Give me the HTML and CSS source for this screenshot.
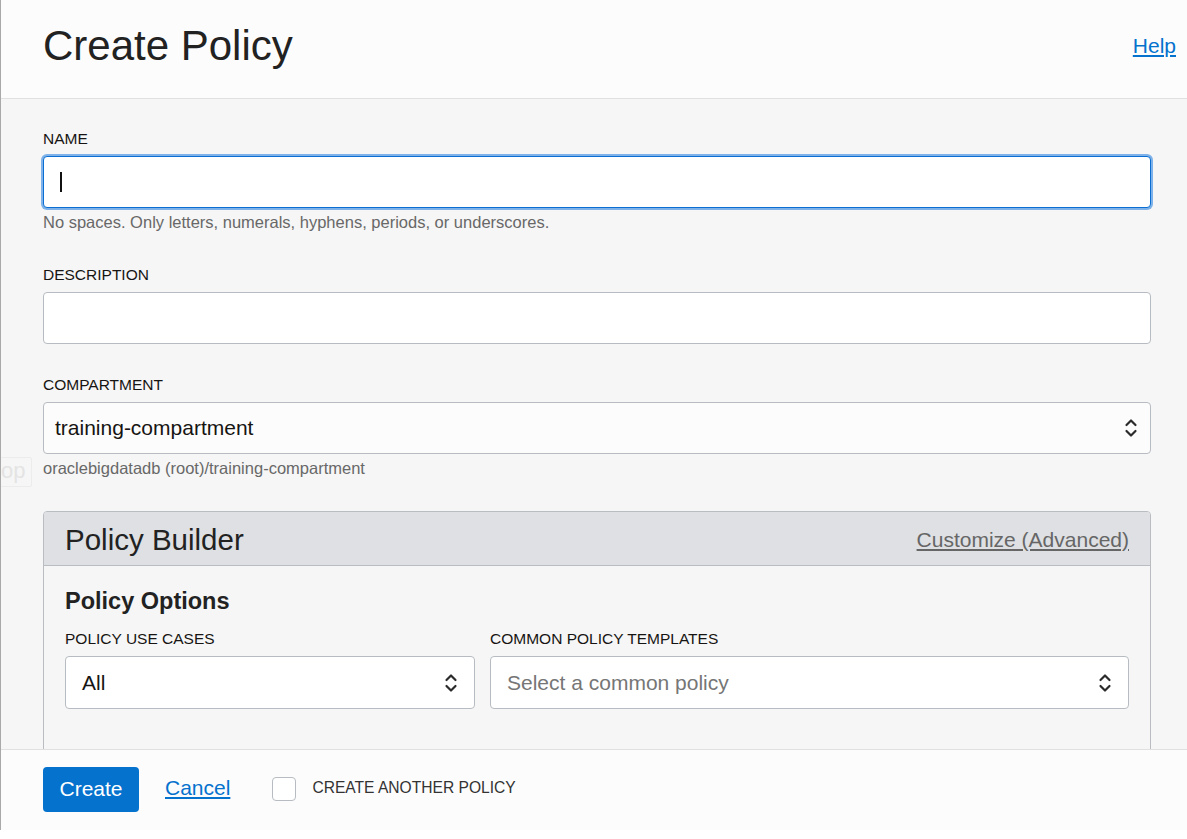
FILE: index.html
```html
<!DOCTYPE html>
<html lang="en">
<head>
<meta charset="utf-8">
<title>Create Policy</title>
<link rel="stylesheet" href="styles.css">
</head>
<body>
<div class="panel">
  <header class="head">
    <h1 class="title">Create Policy</h1>
    <a class="help" href="#">Help</a>
  </header>
  <main class="main">
    <div class="ghost">op</div>
    <div class="field">
      <label class="label">NAME</label>
      <div class="input focused"><span class="caret"></span></div>
      <div class="hint">No spaces. Only letters, numerals, hyphens, periods, or underscores.</div>
    </div>
    <div class="field">
      <label class="label">DESCRIPTION</label>
      <div class="input"></div>
    </div>
    <div class="field">
      <label class="label">COMPARTMENT</label>
      <div class="input select offwhite"><span class="value">training-compartment</span>
        <svg class="chev" width="14" height="22" viewBox="0 0 14 22"><path d="M2.5 8 L7 3.5 L11.5 8" fill="none" stroke="#2b2b2b" stroke-width="2.2" stroke-linecap="round" stroke-linejoin="round"/><path d="M2.5 14 L7 18.5 L11.5 14" fill="none" stroke="#2b2b2b" stroke-width="2.2" stroke-linecap="round" stroke-linejoin="round"/></svg>
      </div>
      <div class="hint">oraclebigdatadb (root)/training-compartment</div>
    </div>
    <section class="builder">
      <div class="builder-head">
        <h2 class="builder-title">Policy Builder</h2>
        <a class="customize" href="#">Customize (Advanced)</a>
      </div>
      <div class="builder-body">
        <h3 class="options-title">Policy Options</h3>
        <div class="options-grid">
          <div class="opt">
            <label class="label">POLICY USE CASES</label>
            <div class="input select sel-sm"><span class="value">All</span>
              <svg class="chev" width="14" height="22" viewBox="0 0 14 22"><path d="M2.5 8 L7 3.5 L11.5 8" fill="none" stroke="#2b2b2b" stroke-width="2.2" stroke-linecap="round" stroke-linejoin="round"/><path d="M2.5 14 L7 18.5 L11.5 14" fill="none" stroke="#2b2b2b" stroke-width="2.2" stroke-linecap="round" stroke-linejoin="round"/></svg>
            </div>
          </div>
          <div class="opt">
            <label class="label">COMMON POLICY TEMPLATES</label>
            <div class="input select sel-sm"><span class="value placeholder">Select a common policy</span>
              <svg class="chev" width="14" height="22" viewBox="0 0 14 22"><path d="M2.5 8 L7 3.5 L11.5 8" fill="none" stroke="#2b2b2b" stroke-width="2.2" stroke-linecap="round" stroke-linejoin="round"/><path d="M2.5 14 L7 18.5 L11.5 14" fill="none" stroke="#2b2b2b" stroke-width="2.2" stroke-linecap="round" stroke-linejoin="round"/></svg>
            </div>
          </div>
        </div>
      </div>
    </section>
  </main>
  <footer class="foot">
    <button class="btn-primary">Create</button>
    <a class="cancel" href="#">Cancel</a>
    <span class="checkbox"></span>
    <span class="check-label">CREATE ANOTHER POLICY</span>
  </footer>
</div>
</body>
</html>
```

FILE: styles.css
```css
* { box-sizing: border-box; }
html, body { margin: 0; padding: 0; background: #ffffff; }
body { font-family: "Liberation Sans", Arial, sans-serif; color: #161513; }

.panel {
  height: 830px;
  border-left: 1px solid #a9a9a9;
  display: flex;
  flex-direction: column;
  overflow: hidden;
}

.head {
  height: 99px;
  flex: none;
  background: #fcfcfc;
  border-bottom: 1px solid #e0e0e0;
  display: flex;
  justify-content: space-between;
  align-items: flex-start;
  padding: 0 11px 0 42px;
}
.title {
  margin: 25px 0 0;
  font-size: 42px;
  line-height: 42px;
  font-weight: 400;
  color: #222222;
}
.help {
  margin-top: 35px;
  font-size: 21px;
  line-height: 21px;
  color: #0572ce;
  text-decoration: underline;
}

.main {
  flex: 1;
  background: #f6f6f6;
  padding: 30px 36px 0 42px;
  position: relative;
  overflow: hidden;
}

.ghost {
  position: absolute;
  left: -1px;
  top: 358px;
  width: 32px;
  height: 30px;
  border: 1px solid #ececec;
  border-radius: 2px;
  color: #e4e4e4;
  font-size: 22px;
  line-height: 26px;
  text-align: right;
  padding-right: 8px;
  overflow: hidden;
}

.field { margin-bottom: 33px; }
.field:nth-child(3) { margin-bottom: 31px; }

.label {
  display: block;
  font-size: 15.5px;
  line-height: 20px;
  color: #161513;
  margin-bottom: 7px;
}

.input {
  height: 52px;
  background: #ffffff;
  border: 1px solid #b7bcc2;
  border-radius: 4px;
  display: flex;
  align-items: center;
  padding: 0 11px;
  position: relative;
}
.input.focused {
  border: 1px solid #0b6ed2;
  box-shadow: 0 0 0 2px #7fb2e8;
}
.caret {
  display: block;
  width: 2px;
  height: 20px;
  background: #111;
  margin-left: 5px;
}
.offwhite { background: #fdfcfc; }

.value {
  font-size: 21px;
  color: #161513;
  flex: 1;
}
.placeholder { color: #767676; }
.chev { flex: none; margin-right: 1px; }

.hint {
  font-size: 16.5px;
  line-height: 20px;
  color: #686868;
  margin-top: 4px;
}

.builder {
  margin-top: 6px;
  border: 1px solid #b9bdc2;
  border-radius: 4px 4px 0 0;
  height: 400px;
}
.builder-head {
  height: 54px;
  background: #dee0e3;
  border-bottom: 1px solid #b9bdc2;
  border-radius: 3px 3px 0 0;
  display: flex;
  justify-content: space-between;
  align-items: center;
  padding: 2px 21px 0 21px;
}
.builder-title {
  margin: 0;
  font-size: 29.5px;
  font-weight: 400;
  color: #222222;
}
.customize {
  font-size: 21px;
  color: #666666;
  text-decoration: underline;
}
.builder-body {
  background: #f6f6f6;
  padding: 21px 21px 0 21px;
}
.options-title {
  margin: 0 0 14px;
  font-size: 23.5px;
  line-height: 28px;
  font-weight: 700;
  color: #222222;
}
.options-grid {
  display: grid;
  grid-template-columns: 410px 1fr;
  gap: 15px;
}
.opt .label { margin-bottom: 7px; }
.sel-sm { height: 53px; padding: 0 15px 0 16px; }

.foot {
  height: 81px;
  flex: none;
  background: #fcfcfc;
  border-top: 1px solid #e0e0e0;
  display: flex;
  align-items: center;
  padding: 0 0 0 42px;
}
.btn-primary {
  height: 45px;
  width: 96px;
  background: #0572ce;
  border: none;
  border-radius: 4px;
  color: #ffffff;
  font-family: "Liberation Sans", Arial, sans-serif;
  font-size: 21px;
  padding: 0;
  margin-top: -2px;
}
.cancel {
  margin-left: 26px;
  font-size: 21px;
  color: #0572ce;
  text-decoration: underline;
  margin-top: -4px;
}
.checkbox {
  display: block;
  width: 24px;
  height: 24px;
  border: 1px solid #b7bcc2;
  border-radius: 4px;
  background: #ffffff;
  margin-left: 42px;
  margin-top: -2px;
}
.check-label {
  margin-left: 16px;
  font-size: 15.6px;
  color: #333333;
  margin-top: -4px;
}
```
